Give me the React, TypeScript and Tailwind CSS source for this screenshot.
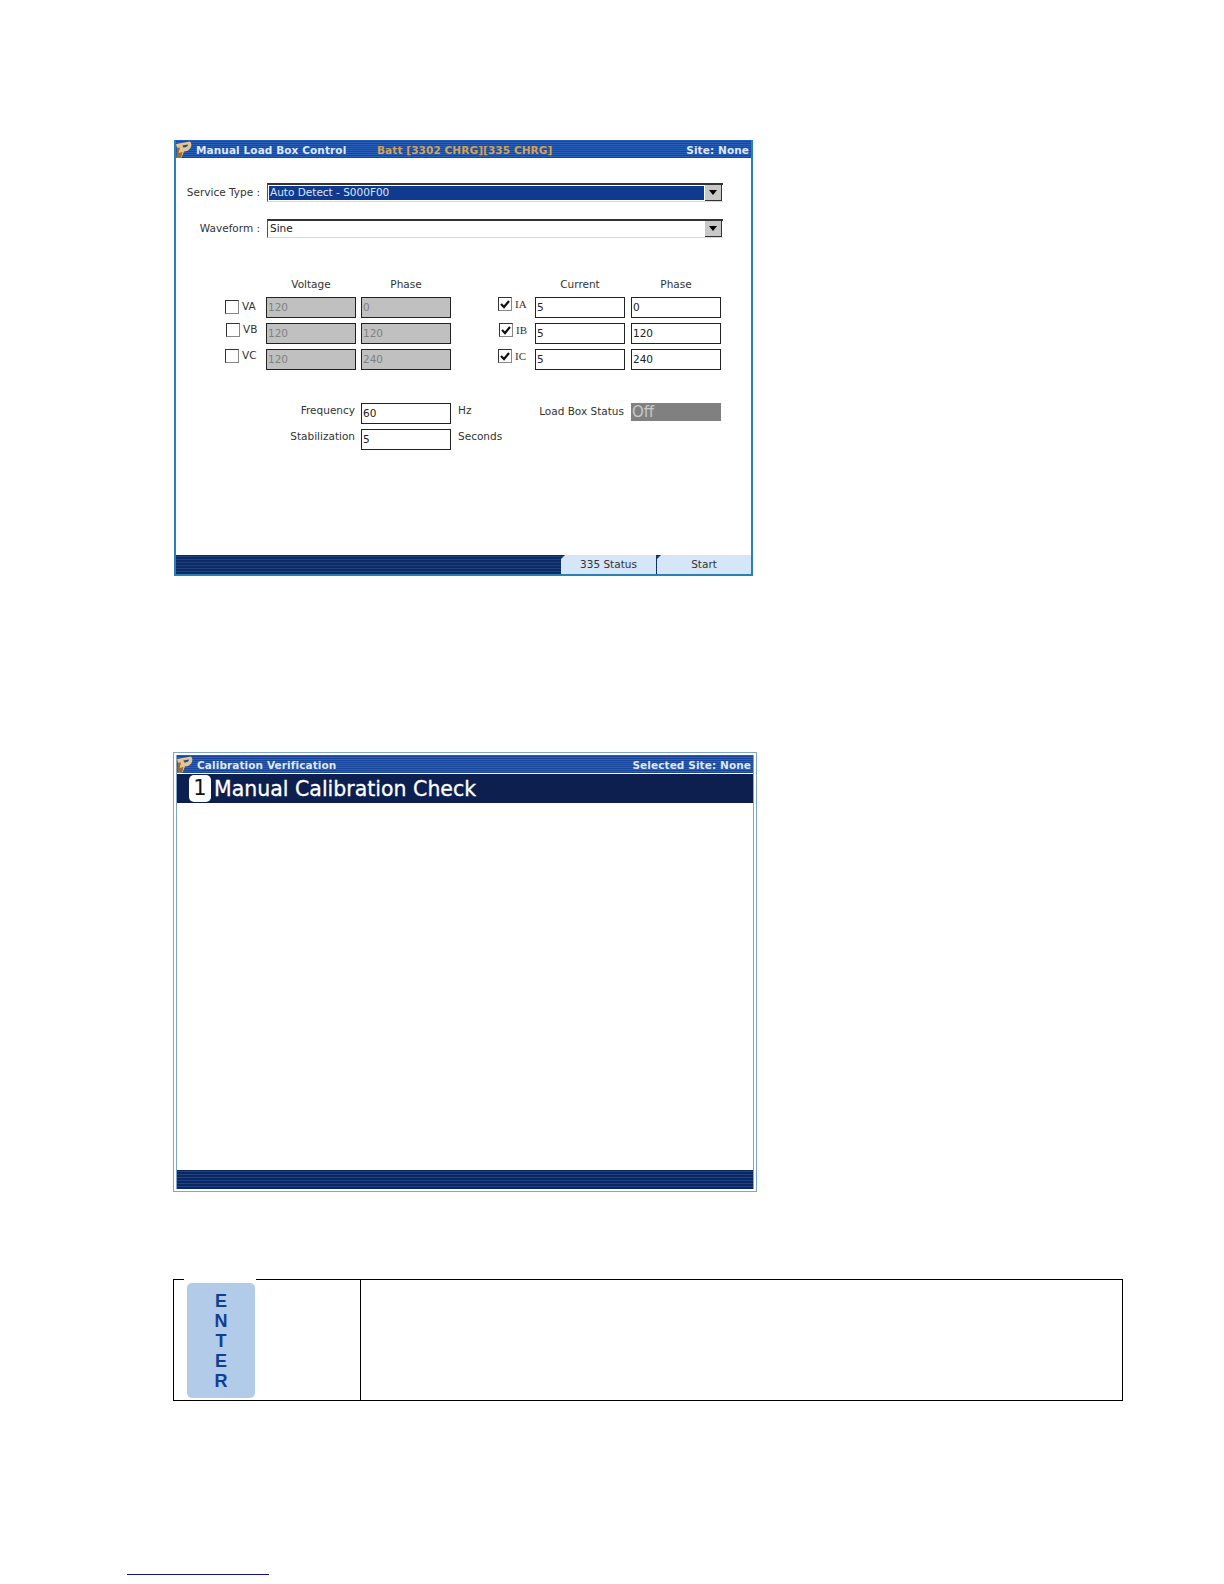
const ui = { fontFamily: '"DejaVu Sans", sans-serif' };

function Logo({ className }: { className: string }) {
  return (
    <svg className={className} viewBox="0 0 16 17">
      <path d="M0 3 L14 0.5 Q16.5 3 14.5 7 Q12 10.5 8 10.5 L5.5 16.5 L0.5 16.5 L3.5 7 L1 7 Z" fill="#e6c48e" />
      <path d="M1 6.8 L4 6.5 L2.5 12 L6.5 11 L5 16.5 L0.5 16.5 Z" fill="#9a6a30" />
      <path d="M6.4 4.4 L12 3.4 Q12 6 7.4 6.6 Z" fill="#1c4aa0" />
    </svg>
  );
}

function TitleBar({ title, right, middle }: { title: string; right: string; middle?: string }) {
  return (
    <div className="flex h-[18px] items-center bg-[#17469c] bg-[repeating-linear-gradient(0deg,#17469c_0px,#17469c_1px,#2a5fb8_1px,#2a5fb8_2px)] pt-1 text-[10.5px] font-bold tracking-[0.1px] text-[#dfe9f5]">
      <Logo className="-mt-1 h-[17px] w-4 shrink-0" />
      <span className="ml-1 w-[181px] shrink-0 whitespace-nowrap">{title}</span>
      {middle && <span className="whitespace-nowrap text-[#d8a24a]">{middle}</span>}
      <span className="ml-auto mr-0.5 whitespace-nowrap">{right}</span>
    </div>
  );
}

function Select({ value, selected, className }: { value: string; selected?: boolean; className: string }) {
  return (
    <div className={`flex h-[19px] w-[456px] items-stretch border-t-2 border-l border-b border-t-[#333] border-l-[#555] border-b-[#d8d8d8] ${className}`}>
      <div className={`my-px ml-px flex flex-1 items-center pl-px text-[10.5px] ${selected ? "bg-[#0f3a8f] text-[#dce6f5]" : "text-[#222]"}`}>{value}</div>
      <div className="mx-[1px] flex w-[17px] items-center justify-center border-r border-b border-[#333] bg-[#c8c8c8]">
        <div className="h-0 w-0 border-x-4 border-t-[5px] border-x-transparent border-t-black" />
      </div>
    </div>
  );
}

function Field({ value, disabled, className = "" }: { value: string; disabled?: boolean; className?: string }) {
  return (
    <div
      className={`flex h-[21px] w-[90px] items-center border border-[#222] pl-px text-[10.5px] ${
        disabled ? "bg-[#c0c0c0] text-[#808080]" : "bg-white text-[#222]"
      } ${className}`}
    >
      {value}
    </div>
  );
}

function Check({ on }: { on?: boolean }) {
  return (
    <div className="flex h-3.5 w-3.5 shrink-0 items-center justify-center border border-t-[#333] border-l-[#333] border-b-[#888] border-r-[#888] bg-white">
      {on && (
        <svg viewBox="0 0 12 12" className="h-3 w-3">
          <path d="M2 6 L5 9 L10 3" fill="none" stroke="#111" strokeWidth="2.2" />
        </svg>
      )}
    </div>
  );
}

type ChannelProps = {
  label: string;
  on?: boolean;
  a: string;
  b: string;
  disabled?: boolean;
  serif?: boolean;
  labelClass: string;
  gapClass: string;
};

function Channel({ label, on, a, b, disabled, serif, labelClass, gapClass }: ChannelProps) {
  return (
    <div className="flex h-[26px] items-start">
      <div className={`flex items-center gap-[3px] text-[10.5px] text-[#333] ${labelClass}`}>
        <Check on={on} />
        <span className={serif ? "font-['Liberation_Serif'] text-[11px]" : ""}>{label}</span>
      </div>
      <Field value={a} disabled={disabled} />
      <Field value={b} disabled={disabled} className={gapClass} />
    </div>
  );
}

function ColHeads({ a, b, className, gapClass }: { a: string; b: string; className: string; gapClass: string }) {
  return (
    <div className={`flex h-5 text-[10.5px] text-[#333] ${className}`}>
      <div className="w-[90px] text-center">{a}</div>
      <div className={`w-[90px] text-center ${gapClass}`}>{b}</div>
    </div>
  );
}

function LoadBoxScreen() {
  return (
    <div className="ml-[174px] flex h-[436px] w-[579px] flex-col border-x-2 border-b-2 border-[#2a7fb5] bg-white" style={ui}>
      <TitleBar title="Manual Load Box Control" middle="Batt [3302 CHRG][335 CHRG]" right="Site: None" />

      <div className="flex-1 pl-[7px]">
        <div className="mt-[25px] flex items-center">
          <div className="w-[77px] whitespace-nowrap text-right text-[10.5px] text-[#333]">Service Type :</div>
          <Select value="Auto Detect - S000F00" selected className="ml-[7px]" />
        </div>
        <div className="mt-[17px] flex items-center">
          <div className="w-[77px] whitespace-nowrap text-right text-[10.5px] text-[#333]">Waveform :</div>
          <Select value="Sine" className="ml-[7px]" />
        </div>

        <div className="mt-[39px] flex pl-[42px]">
          <div>
            <ColHeads a="Voltage" b="Phase" className="pl-[41px]" gapClass="ml-[5px]" />
            <Channel label="VA" a="120" b="0" disabled labelClass="w-[41px] pt-0.5" gapClass="ml-[5px]" />
            <Channel label="VB" a="120" b="120" disabled labelClass="-mt-px w-[41px] pl-px" gapClass="ml-[5px]" />
            <Channel label="VC" a="120" b="240" disabled labelClass="-mt-px w-[41px]" gapClass="ml-[5px]" />
          </div>
          <div className="ml-[47px]">
            <ColHeads a="Current" b="Phase" className="pl-[37px]" gapClass="ml-1.5" />
            <Channel label="IA" on a="5" b="0" serif labelClass="-mt-px w-[37px]" gapClass="ml-1.5" />
            <Channel label="IB" on a="5" b="120" serif labelClass="-mt-px w-[37px] pl-px" gapClass="ml-1.5" />
            <Channel label="IC" on a="5" b="240" serif labelClass="-mt-px w-[37px]" gapClass="ml-1.5" />
          </div>
        </div>

        <div className="mt-7 flex text-[10.5px] text-[#333]">
          <div className="flex flex-col">
            <div className="flex h-[26px] items-start">
              <div className="w-[178px] pr-1.5 text-right">Frequency</div>
              <Field value="60" />
              <div className="ml-[7px]">Hz</div>
            </div>
            <div className="flex h-[26px] items-start">
              <div className="w-[178px] pr-1.5 text-right">Stabilization</div>
              <Field value="5" />
              <div className="ml-[7px]">Seconds</div>
            </div>
          </div>
          <div className="ml-[37px] flex h-[18px] items-center">
            <div className="whitespace-nowrap">Load Box Status</div>
            <div className="ml-[7px] flex h-[18px] w-[90px] items-center bg-[#808080] pl-px text-[15px] text-[#c8c8c8]">Off</div>
          </div>
        </div>
      </div>

      <div className="flex h-[19px] justify-end bg-[#10306b] bg-[repeating-linear-gradient(0deg,#0d2a62_0px,#0d2a62_2px,#1c437f_2px,#1c437f_3px)]">
        <div className="flex w-[95px] items-center justify-center bg-[#d4e6f8] text-[10.5px] text-[#333] [clip-path:polygon(4px_0,100%_0,100%_100%,0_100%,0_4px)]">335 Status</div>
        <div className="ml-px flex w-[94px] items-center justify-center bg-[#d4e6f8] text-[10.5px] text-[#333] [clip-path:polygon(4px_0,100%_0,100%_100%,0_100%,0_4px)]">Start</div>
      </div>
    </div>
  );
}

function CalibrationScreen() {
  return (
    <div className="mt-[176px] ml-[173px] h-[440px] w-[584px] border border-[#7fa6c8] p-0.5" style={ui}>
      <div className="flex h-full flex-col border-x border-[#7fa6c8]">
        <TitleBar title="Calibration Verification" right="Selected Site: None" />
        <div className="mt-px flex h-[29px] items-center bg-[#0c1f4f] pl-3">
          <div className="flex h-[27px] w-[22px] items-center justify-center rounded-[5px] bg-white text-[21px] text-[#111]">1</div>
          <div className="ml-[3px] mt-0.5 whitespace-nowrap text-[20.5px] leading-none text-white [-webkit-text-stroke:0.3px_white]">Manual Calibration Check</div>
        </div>
        <div className="flex-1 bg-white" />
        <div className="h-[19px] bg-[#10306b] bg-[repeating-linear-gradient(0deg,#0c2760_0px,#0c2760_2px,#1d4585_2px,#1d4585_3px)]" />
      </div>
    </div>
  );
}

function EnterRow() {
  const letters = ["E", "N", "T", "E", "R"];
  return (
    <div className="mt-[87px] ml-[173px] flex h-[122px] w-[950px] border border-black">
      <div className="relative w-[187px] border-r border-black">
        {/* white halo of the pasted key picture breaks the table's top rule */}
        <div className="absolute -top-px left-[10px] h-[5px] w-[72px] bg-white" />
        <div
          className="absolute top-[3px] left-[13px] flex h-[115px] w-[68px] flex-col items-center rounded-[5px] bg-[#b1cbe9] pt-2 text-lg font-bold leading-5 text-[#0f3f94]"
          style={{ fontFamily: '"Liberation Sans", sans-serif' }}
        >
          {letters.map((l, i) => (
            <span key={i}>{l}</span>
          ))}
        </div>
      </div>
      <div className="flex-1" />
    </div>
  );
}

export default function App() {
  return (
    <div className="relative h-[1584px] w-[1224px] overflow-hidden bg-white pt-[140px]">
      <LoadBoxScreen />
      <CalibrationScreen />
      <EnterRow />
      <div className="mt-[173px] ml-[127px] h-px w-[142px] bg-[#10108a]" />
    </div>
  );
}
